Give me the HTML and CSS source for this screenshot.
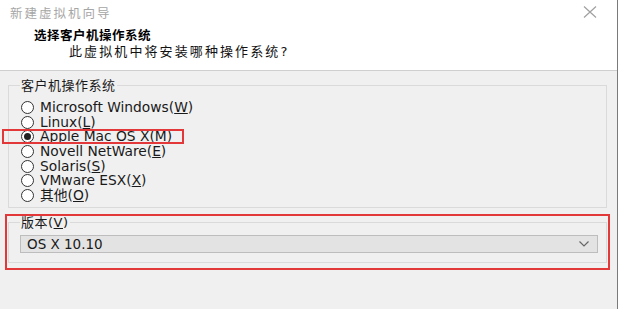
FILE: index.html
```html
<!DOCTYPE html>
<html lang="zh-CN">

<head>
    <meta charset="UTF-8">
    <title>新建虚拟机向导</title>
    <link rel="stylesheet" href="styles.css">
</head>

<body>
    <div class="window">
        <div class="header">
            <div class="titlebar">
                <span class="title">新建虚拟机向导</span>
                <svg class="close" width="14" height="12" viewBox="0 0 14 12">
                    <path d="M1 0.5L13 11.5M13 0.5L1 11.5" stroke="#a0a0a0" stroke-width="1.2" fill="none" />
                </svg>
            </div>
            <div class="heading">选择客户机操作系统</div>
            <div class="subtitle">此虚拟机中将安装哪种操作系统?</div>
        </div>
        <div class="content">
            <div class="group os-group">
                <div class="group-title">客户机操作系统</div>
                <ul class="radios">
                    <li><span class="radio"></span>Microsoft Windows(<u>W</u>)</li>
                    <li><span class="radio"></span>Linux(<u>L</u>)</li>
                    <li class="marked"><span class="radio checked"></span>Apple Mac OS X(<u>M</u>)<span class="mark"></span></li>
                    <li><span class="radio"></span>Novell NetWare(<u>E</u>)</li>
                    <li><span class="radio"></span>Solaris(<u>S</u>)</li>
                    <li><span class="radio"></span>VMware ESX(<u>X</u>)</li>
                    <li><span class="radio"></span>其他(<u>O</u>)</li>
                </ul>
            </div>
            <div class="group version-group">
                <div class="group-title">版本(<u>V</u>)</div>
                <div class="select">
                    <span>OS X 10.10</span>
                    <svg width="10" height="6" viewBox="0 0 10 6">
                        <path d="M0.5 0.5L5 5L9.5 0.5" stroke="#666" stroke-width="1.2" fill="none" />
                    </svg>
                </div>
                <span class="mark"></span>
            </div>
        </div>
    </div>
</body>

</html>
```

FILE: styles.css
```css
/* 全局样式 */
html {
    background-color: #fff;
}

body {
    margin: 0;
    padding: 0;
    font-family: 'DejaVu Sans', 'Noto Sans CJK SC', sans-serif;
    font-size: 13px;
    color: #1a1a1a;
}

/* 窗口 */
.window {
    width: 617px;
    height: 309px;
    background-color: #f0f0f0;
    border-right: 1px solid #7a7a7a;
    overflow: hidden;
}

/* 顶部白色区域 */
.header {
    height: 70px;
    background-color: #fff;
    border-bottom: 1px solid #cfcfcf;
}

.titlebar {
    height: 24px;
    padding: 0 20px 0 10px;
    display: flex;
    align-items: center;
    justify-content: space-between;
}

.title {
    color: #a6a6a6;
    font-size: 12.5px;
    letter-spacing: 2px;
}

.heading {
    margin-top: 4px;
    padding-left: 34px;
    line-height: 16px;
    font-weight: bold;
    font-size: 12.5px;
    letter-spacing: 0.5px;
    color: #000;
}

.subtitle {
    padding-left: 69px;
    line-height: 16px;
    letter-spacing: 2.1px;
    color: #111;
}

/* 分组框 */
.content {
    padding: 0 10px 0 8px;
}

.group {
    position: relative;
    border: 1px solid #dadada;
}

.group-title {
    width: fit-content;
    margin: -8px 0 0 11px;
    padding: 0 1px;
    line-height: 15px;
    background-color: #f0f0f0;
    letter-spacing: 0.5px;
}

.os-group {
    margin-top: 14px;
    padding-bottom: 4px;
}

.radios {
    list-style: none;
    margin: 7px 0 0;
    padding: 0 0 0 12px;
    font-size: 13.8px;
}

.radios li {
    display: flex;
    align-items: center;
    height: 14.7px;
    line-height: 14.7px;
    white-space: nowrap;
}

.radio {
    box-sizing: border-box;
    width: 13px;
    height: 13px;
    margin-right: 6px;
    border: 1px solid #333;
    border-radius: 50%;
    background-color: #fff;
    display: flex;
    align-items: center;
    justify-content: center;
}

.radio.checked::after {
    content: "";
    width: 7px;
    height: 7px;
    border-radius: 50%;
    background-color: #222;
}

.marked {
    position: relative;
}

/* 红色标注框 */
.mark {
    position: absolute;
    box-sizing: border-box;
    border: 2px solid #e3383a;
    pointer-events: none;
}

.marked .mark {
    left: -19px;
    top: 0;
    width: 182px;
    height: 15px;
}

.version-group {
    margin-top: 14px;
    padding-bottom: 9px;
}

.version-group .mark {
    left: -4px;
    right: -4px;
    top: -9px;
    bottom: -8px;
}

/* 下拉框 */
.select {
    box-sizing: border-box;
    margin: 5px 0 0 11px;
    width: 578px;
    height: 18px;
    padding: 0 8px 0 6px;
    display: flex;
    align-items: center;
    justify-content: space-between;
    background-color: #e3e3e3;
    border: 1px solid #bdbdbd;
    font-size: 13.5px;
}
```
